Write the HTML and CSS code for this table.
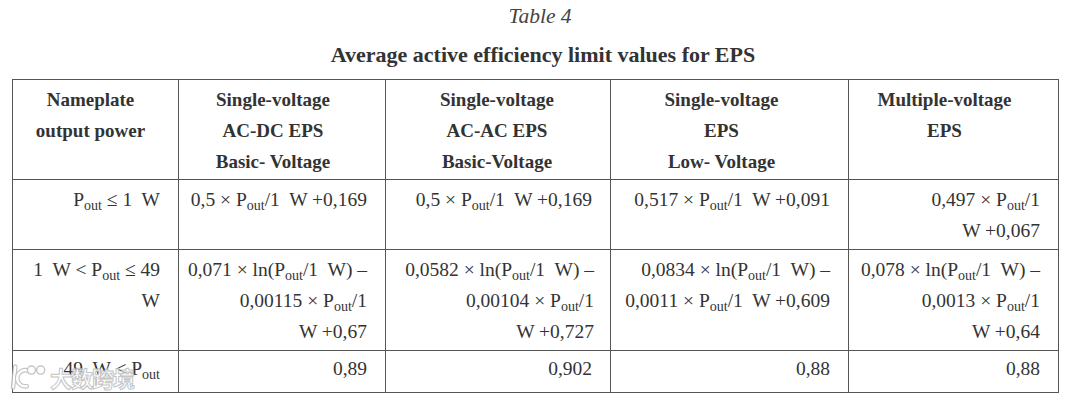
FILE: index.html
```html
<!DOCTYPE html>
<html>
<head>
<meta charset="utf-8">
<link rel="stylesheet" href="styles.css">
</head>
<body>
<div class="page">
  <div class="caption">Table 4</div>
  <div class="title">Average active efficiency limit values for EPS</div>
  <table class="eps">
    <colgroup>
      <col class="c1"><col class="c2"><col class="c3"><col class="c4"><col class="c5">
    </colgroup>
    <tr class="head">
      <th class="h1">Nameplate<br>output power</th>
      <th class="h2">Single-voltage<br>AC-DC EPS<br>Basic- Voltage</th>
      <th class="h3">Single-voltage<br>AC-AC EPS<br>Basic-Voltage</th>
      <th class="h4">Single-voltage<br>EPS<br>Low- Voltage</th>
      <th class="h5">Multiple-voltage<br>EPS</th>
    </tr>
    <tr class="r1">
      <td>P<sub>out</sub> ≤ 1&nbsp; W</td>
      <td>0,5 × P<sub>out</sub>/1&nbsp; W +0,169</td>
      <td>0,5 × P<sub>out</sub>/1&nbsp; W +0,169</td>
      <td>0,517 × P<sub>out</sub>/1&nbsp; W +0,091</td>
      <td>0,497 × P<sub>out</sub>/1<br>W +0,067</td>
    </tr>
    <tr class="r2">
      <td>1&nbsp; W &lt; P<sub>out</sub> ≤ 49<br>W</td>
      <td>0,071 × ln(P<sub>out</sub>/1&nbsp; W) –<br>0,00115 × P<sub>out</sub>/1<br>W +0,67</td>
      <td class="wide">0,0582 × ln(P<sub>out</sub>/1&nbsp; W) –<br>0,00104 × P<sub>out</sub>/1<br>W +0,727</td>
      <td>0,0834 × ln(P<sub>out</sub>/1&nbsp; W) –<br>0,0011 × P<sub>out</sub>/1&nbsp; W +0,609</td>
      <td>0,078 × ln(P<sub>out</sub>/1&nbsp; W) –<br>0,0013 × P<sub>out</sub>/1<br>W +0,64</td>
    </tr>
    <tr class="r3">
      <td>49&nbsp; W &lt; P<sub>out</sub></td>
      <td>0,89</td>
      <td>0,902</td>
      <td>0,88</td>
      <td>0,88</td>
    </tr>
  </table>
  <div class="watermark">
    <svg class="wm-icon" width="40" height="30" viewBox="0 0 34 26">
      <path d="M6 4 L4 22" fill="none" stroke="#bbb" stroke-width="4" stroke-linecap="round"/>
      <path d="M6 4 L4 22" fill="none" stroke="#fff" stroke-width="2" stroke-linecap="round"/>
      <path d="M18 8 A7 7 0 1 0 16 21" fill="none" stroke="#bbb" stroke-width="4" stroke-linecap="round"/>
      <path d="M18 8 A7 7 0 1 0 16 21" fill="none" stroke="#fff" stroke-width="2" stroke-linecap="round"/>
      <circle cx="20" cy="7" r="3.5" fill="#fff" stroke="#bbb" stroke-width="1.2"/>
      <circle cx="28" cy="7" r="3.5" fill="#fff" stroke="#bbb" stroke-width="1.2"/>
    </svg>
    <span class="wm-text">大数跨境</span>
  </div>
</div>
</body>
</html>
```
FILE: styles.css
```css
html, body {
  margin: 0;
  padding: 0;
  background: #fff;
}
.page {
  position: relative;
  width: 1080px;
  height: 400px;
  font-family: "Liberation Serif", "Times New Roman", Times, serif;
  color: #333;
}
.caption {
  padding-top: 3px;
  text-align: center;
  font-style: italic;
  font-size: 21.5px;
  line-height: 26px;
  color: #444;
}
.title {
  margin-top: 13px;
  text-align: center;
  font-weight: bold;
  font-size: 22px;
  line-height: 26px;
  color: #333;
  padding-left: 6px;
}
.eps {
  margin: 11px 0 0 12px;
  border-collapse: collapse;
  table-layout: fixed;
  width: 1046px;
  font-size: 19.5px;
  line-height: 31px;
}
.c1 { width: 166px; }
.c2 { width: 207px; }
.c3 { width: 225px; }
.c4 { width: 238px; }
.c5 { width: 210px; }
.eps th, .eps td {
  border: 1px solid #555;
  vertical-align: top;
  padding: 4px 18px 0 8px;
  white-space: nowrap;
}
.eps tr { border-top: 1px solid #222; border-bottom: 1px solid #222; }
.eps th {
  font-weight: bold;
  font-size: 19px;
  text-align: center;
  color: #333;
  padding-right: 8px;
}
.head { height: 100px; }
.eps .h1 { padding-left: 4px; padding-right: 14px; }
.eps .h2 { padding-right: 26px; }
.eps .h3 { padding-right: 10px; }
.eps .h4 { padding-right: 24px; }
.eps .h5 { padding-right: 26px; }
.eps td { text-align: right; }
.eps td.wide { padding-left: 0; padding-right: 16px; }
.r1 { height: 70px; }
.r2 { height: 101px; }
.r3 { height: 42px; }
.r3 td { padding-top: 2px; }
sub {
  font-size: 14px;
  line-height: 0;
  vertical-align: -4px;
}
.watermark {
  position: absolute;
  left: 8px;
  top: 362px;
  display: flex;
  align-items: center;
  gap: 2px;
  opacity: 0.85;
}
.wm-text {
  font-family: "Noto Sans CJK SC", sans-serif;
  font-weight: bold;
  font-size: 22px;
  line-height: 30px;
  color: #fff;
  letter-spacing: -1px;
  -webkit-text-stroke: 1px #bbb;
}
```
